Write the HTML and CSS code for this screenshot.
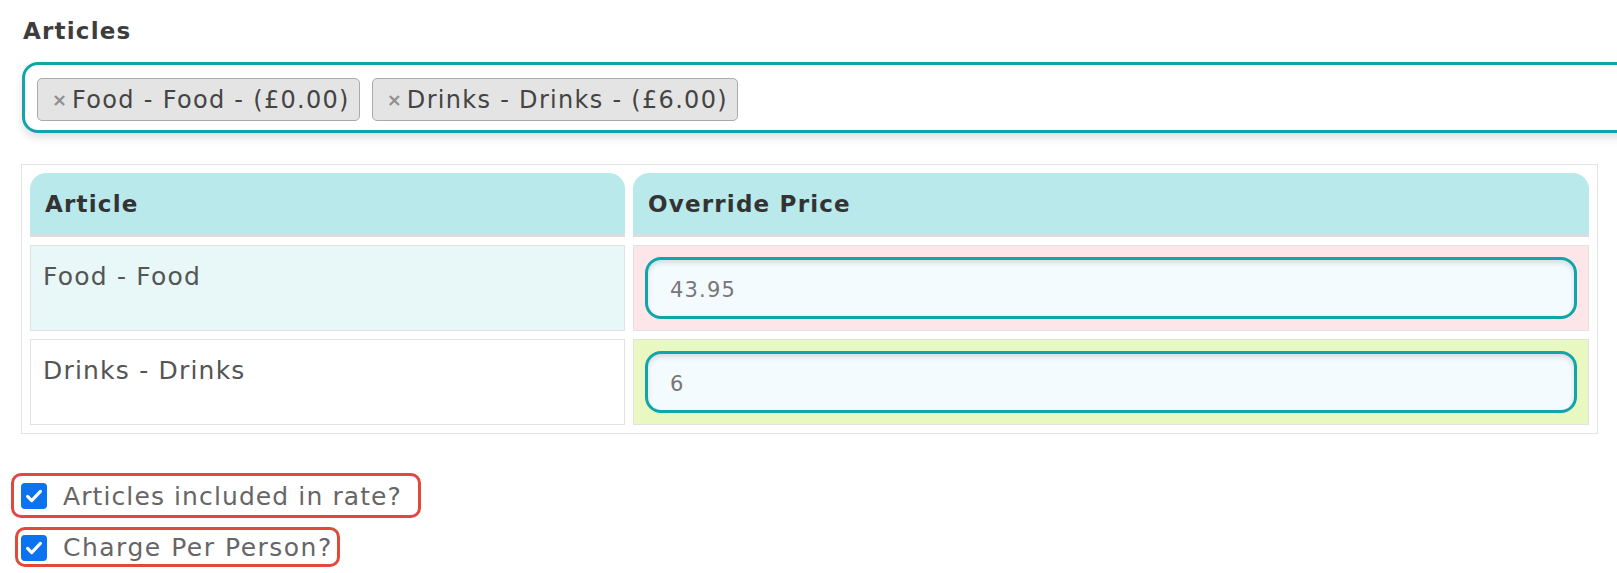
FILE: index.html
```html
<!DOCTYPE html>
<html>
<head>
<meta charset="utf-8">
<link rel="stylesheet" href="styles.css">
</head>
<body>
<div class="page">
  <div class="field-label">Articles</div>
  <div class="select-box">
    <span class="tag"><span class="tag-x">×</span>Food - Food - (£0.00)</span>
    <span class="tag"><span class="tag-x">×</span>Drinks - Drinks - (£6.00)</span>
  </div>

  <table class="articles">
    <thead>
      <tr>
        <th class="col-article">Article</th>
        <th class="col-price">Override Price</th>
      </tr>
    </thead>
    <tbody>
      <tr>
        <td class="cell-name row-odd">Food - Food</td>
        <td class="cell-price price-pink"><div class="price-input">43.95</div></td>
      </tr>
      <tr>
        <td class="cell-name">Drinks - Drinks</td>
        <td class="cell-price price-green"><div class="price-input">6</div></td>
      </tr>
    </tbody>
  </table>

  <div class="checks">
    <label class="check check-first">
      <span class="box"><svg viewBox="0 0 24 24" width="22" height="22"><path d="M5 12.5l4.5 4.5L19 7" fill="none" stroke="#fff" stroke-width="3.4" stroke-linecap="round" stroke-linejoin="round"/></svg></span>
      <span class="check-text">Articles included in rate?</span>
    </label>
    <label class="check check-second">
      <span class="box"><svg viewBox="0 0 24 24" width="22" height="22"><path d="M5 12.5l4.5 4.5L19 7" fill="none" stroke="#fff" stroke-width="3.4" stroke-linecap="round" stroke-linejoin="round"/></svg></span>
      <span class="check-text check-text-wide">Charge Per Person?</span>
    </label>
  </div>
</div>
</body>
</html>
```
FILE: styles.css
```css
html, body {
  margin: 0;
  padding: 0;
  background: #fff;
  overflow: hidden;
}
body {
  font-family: "DejaVu Sans", "Open Sans", sans-serif;
  color: #555;
}
.page {
  padding: 16px 0 0 21px;
  width: 1577px;
}
.field-label {
  font-weight: 700;
  font-size: 23px;
  letter-spacing: 1.2px;
  color: #3d3d3d;
  line-height: 30px;
  padding-left: 2px;
  margin-bottom: 16px;
}
.select-box {
  box-sizing: border-box;
  width: 1640px;
  height: 71px;
  margin-left: 1px;
  border: 3.5px solid #10a5a9;
  border-radius: 16px;
  box-shadow: 0 5px 8px rgba(0, 0, 0, 0.12);
  display: flex;
  align-items: center;
  gap: 12px;
  padding: 3px 12px 0;
  background: #fff;
}
.tag {
  display: inline-flex;
  align-items: center;
  height: 43px;
  box-sizing: border-box;
  padding: 1px 9px 0 14px;
  background: #e4e4e4;
  border: 1.5px solid #aaa;
  border-radius: 5px;
  font-size: 24px;
  letter-spacing: 1.3px;
  color: #444;
}
.tag-x {
  color: #8f8f8f;
  font-weight: 700;
  font-size: 18px;
  letter-spacing: 0;
  margin-right: 5px;
}
.articles {
  margin-top: 31px;
  width: 1577px;
  border-collapse: separate;
  border-spacing: 8px;
  border: 1.5px solid #e4e4e4;
}
.articles th {
  background: #b9e9eb;
  height: 60px;
  text-align: left;
  font-weight: 700;
  font-size: 23px;
  letter-spacing: 1.2px;
  color: #333;
  padding: 1px 15px 0;
  border-radius: 16px 16px 0 0;
  border-bottom: 3px solid #dcdcdc;
}
.col-article {
  width: 565px;
}
.articles td {
  border: 1.5px solid #e2e2e2;
  vertical-align: top;
}
.cell-name {
  height: 84px;
  box-sizing: border-box;
  padding: 16px 12px 10px;
  font-size: 25px;
  letter-spacing: 1.2px;
  line-height: 30px;
  color: #555;
  background: #fff;
}
.row-odd {
  background: #e8f7f8;
}
.cell-price {
  padding: 11px 11px;
}
.price-pink {
  background: #fce6ea;
}
.price-green {
  background: #e8f8c0;
}
.price-input {
  box-sizing: border-box;
  height: 62px;
  border: 3.5px solid #10a5a9;
  border-radius: 16px;
  background: #f3fbfe;
  box-shadow: inset 0 3px 5px rgba(0, 0, 0, 0.12);
  display: flex;
  align-items: center;
  padding: 3px 0 0 22px;
  font-size: 21px;
  letter-spacing: 1.2px;
  color: #777;
}
.checks {
  margin-top: 39px;
  margin-left: -10px;
  display: flex;
  flex-direction: column;
  align-items: flex-start;
  gap: 9px;
}
.check {
  display: inline-flex;
  align-items: center;
  border: 3px solid #e04a3b;
  border-radius: 10px;
  box-sizing: border-box;
}
.check-first {
  height: 45px;
  padding: 1px 16px 0 7px;
}
.check-second {
  height: 40px;
  margin-left: 4px;
  padding: 1px 4px 0 3px;
}
.box {
  width: 26px;
  height: 26px;
  border-radius: 4px;
  background: #0b72f0;
  display: inline-flex;
  align-items: center;
  justify-content: center;
  margin-right: 16px;
}
.check-text {
  font-size: 25px;
  letter-spacing: 1.1px;
  color: #666;
}
.check-text-wide {
  letter-spacing: 1.5px;
}
```
